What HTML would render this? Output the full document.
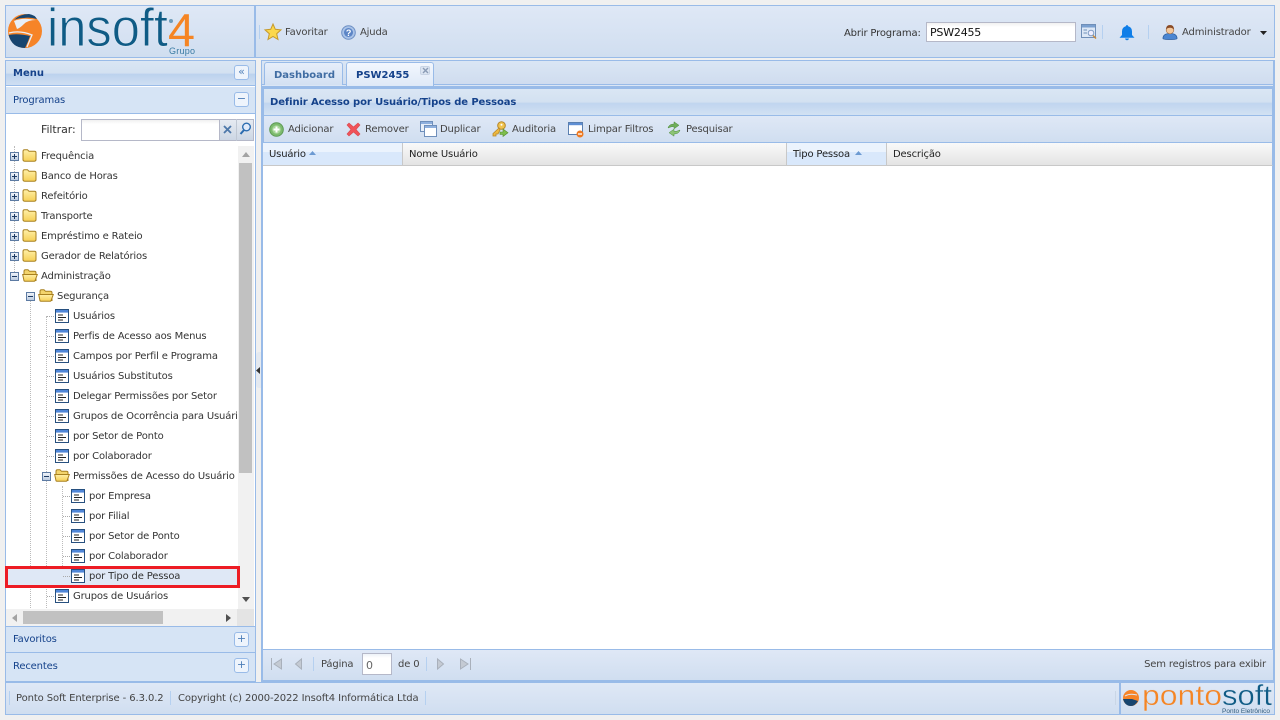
<!DOCTYPE html>
<html lang="pt"><head><meta charset="utf-8"><title>Insoft4</title>
<style>
html,body{margin:0;padding:0;width:1280px;height:720px;overflow:hidden;background:#f0f0f0}
body{position:relative;font-family:"DejaVu Sans","Liberation Sans",sans-serif;font-size:10px;color:#333;letter-spacing:-.16px}
.a{position:absolute;box-sizing:border-box}
.t{position:absolute;white-space:nowrap;line-height:14px;margin-top:1px}
.g1{background:linear-gradient(#dfe8f6,#d0def0)}
.hd{background:linear-gradient(#dae6f4 0,#d3e1f1 50%,#bcd2ee 55%,#cfdff2 100%)}
.row{position:absolute;left:0;height:20px;white-space:nowrap;line-height:22px;color:#333;width:231px;overflow:hidden}
.row span{position:absolute;top:0}
svg{position:absolute;overflow:visible}
.sep{position:absolute;width:1px;background:#b5d0f0}
.btn{position:absolute;width:15px;height:15px;border:1px solid #99bbe8;border-radius:3px;background:#eef4fc;box-sizing:border-box;color:#4f7fb8;text-align:center;line-height:12px;font-size:11px;font-weight:normal;letter-spacing:0}
</style></head><body>
<svg width="0" height="0" style="position:absolute">
<defs>
<linearGradient id="fg" x1="0" y1="0" x2="0" y2="1"><stop offset="0" stop-color="#fff0a8"/><stop offset="1" stop-color="#f6cf55"/></linearGradient>
<linearGradient id="bx" x1="0" y1="0" x2="0" y2="1"><stop offset="0" stop-color="#f2f6fb"/><stop offset="1" stop-color="#b9c9de"/></linearGradient>
<symbol id="fc" viewBox="0 0 15 13"><path d="M1 2.500Q1 .8 2.600 .8H5.500L7 2.300H12.500Q14 2.300 14 3.800V10.500Q14 12.200 12.400 12.200H2.600Q1 12.200 1 10.500Z" fill="url(#fg)" stroke="#a8801f"/></symbol>
<symbol id="fo" viewBox="0 0 16 13"><path d="M2 2.500Q2 .8 3.500 .8H6L7.500 2.300H12.500Q14 2.300 14 3.800V11.500H3Q2 11.500 2 10.500Z" fill="#f3d46c" stroke="#a8801f"/><path d="M.7 5.500H15.300L13 11.800Q12.700 12.200 12 12.200H3Q2.300 12.200 2 11.800Z" fill="url(#fg)" stroke="#a8801f"/></symbol>
<symbol id="pg" viewBox="0 0 14 14"><rect x=".5" y=".5" width="13" height="13" fill="#fff" stroke="#27507f"/><rect x="1" y="1" width="12" height="2.600" fill="#4f86d8"/><path d="M3 6H8M3 8.500H11M3 11H8" stroke="#222" stroke-width="1"/></symbol>
<symbol id="pl" viewBox="0 0 9 9"><rect x=".5" y=".5" width="8" height="8" fill="url(#bx)" stroke="#5d7ba3"/><path d="M2 4.500H7M4.500 2V7" stroke="#1d3a63"/></symbol>
<symbol id="mi" viewBox="0 0 9 9"><rect x=".5" y=".5" width="8" height="8" fill="url(#bx)" stroke="#5d7ba3"/><path d="M2 4.500H7" stroke="#1d3a63"/></symbol>
</defs></svg>

<!-- HEADER -->
<div class="a g1" style="left:5px;top:5px;width:1270px;height:53px;border:1px solid #99bbe8"></div>
<div class="a" style="left:254px;top:6px;width:2px;height:51px;background:#99bbe8"></div>
<svg style="left:0;top:0" width="256" height="58">
 <circle cx="25" cy="31" r="17" fill="#f68428"/>
 <path d="M8.600 35Q17 33 30 36Q28 42 25 48Q12 48 8.600 35Z" fill="#17456f"/>
 <path d="M14 20Q20 14 29 14Q35 15 37 19Q30 17 24 18Q18 18 14 20Z" fill="#17456f"/>
 <path d="M9 33Q20 30 32 35Q29 42 27 47" fill="none" stroke="#e8eef6" stroke-width="1.300"/>
 <path d="M14 21Q23 17 36 20Q28 20 24 24Q20 28 17 29" fill="#e8eef6"/>
 <text x="47" y="46" font-family="Liberation Sans" font-size="54" letter-spacing="0" fill="#0f5b85" stroke="#dae5f3" stroke-width=".9" textLength="121" lengthAdjust="spacingAndGlyphs">insoft</text>
 <text x="168" y="46" font-family="Liberation Sans" font-size="46" letter-spacing="0" fill="#f58524" textLength="27" lengthAdjust="spacingAndGlyphs">4</text>
 <text x="169" y="54" font-family="Liberation Sans" font-size="9" letter-spacing="0" fill="#3a7ba3" textLength="26">Grupo</text>
 <circle cx="171" cy="21" r="2" fill="#6f9dbb"/>
</svg>
<div class="sep" style="left:259px;top:25px;height:14px"></div>
<svg style="left:264px;top:23px" width="18" height="18" viewBox="0 0 18 18"><path d="M9 1L11.300 6.300L17 6.900L12.700 10.700L14 16.500L9 13.500L4 16.500L5.300 10.700L1 6.900L6.700 6.300Z" fill="#fbd84c" stroke="#c69a2c"/></svg>
<div class="t" style="left:285px;top:25px;color:#444">Favoritar</div>
<svg style="left:341px;top:25px" width="15" height="15" viewBox="0 0 15 15"><circle cx="7.500" cy="7.500" r="6.800" fill="#a9c3e8" stroke="#6d8fc4"/><circle cx="7.500" cy="7.500" r="4.500" fill="#5c85c6"/><text x="7.500" y="11" font-size="9" font-weight="bold" fill="#fff" text-anchor="middle" font-family="Liberation Sans">?</text></svg>
<div class="t" style="left:360px;top:25px;color:#444">Ajuda</div>
<div class="t" style="left:844px;top:26px;color:#333">Abrir Programa:</div>
<div class="a" style="left:926px;top:22px;width:150px;height:20px;background:linear-gradient(#f0f0f0,#fff 4px);border:1px solid #b5b8c8"></div>
<div class="t" style="left:930px;top:25px;color:#111;font-size:11px;letter-spacing:-.2px">PSW2455</div>
<svg style="left:1081px;top:24px" width="17" height="16" viewBox="0 0 17 16"><rect x=".5" y=".5" width="14" height="13" fill="#dde8f6" stroke="#6f8fb8"/><rect x="1" y="1" width="13" height="2.500" fill="#7aa0d0"/><path d="M2.500 6H6M2.500 9H6" stroke="#6f8fb8"/><circle cx="10" cy="9" r="2.800" fill="#eef" stroke="#7e9cc4"/><path d="M12 11.500L15 14.500" stroke="#c9893b" stroke-width="1.500"/></svg>
<div class="sep" style="left:1102px;top:25px;height:14px"></div>
<svg style="left:1119px;top:24px" width="16" height="17" viewBox="0 0 16 16"><path d="M8 .5Q9 .5 9.200 1.800Q13 2.800 13 7V10.500L15.500 13.300H.5L3 10.500V7Q3 2.800 6.800 1.800Q7 .5 8 .5ZM6 14H10Q9.500 15.800 8 15.800Q6.500 15.800 6 14Z" fill="#0f7ee8"/></svg>
<div class="sep" style="left:1148px;top:25px;height:14px"></div>
<svg style="left:1162px;top:24px" width="16" height="16" viewBox="0 0 16 16"><path d="M1 14.500Q1 9.500 8 9.500Q15 9.500 15 14.500Q15 15.500 8 15.500Q1 15.500 1 14.500Z" fill="#4b86d2" stroke="#2e5f9f" stroke-width=".8"/><circle cx="8" cy="6" r="3.800" fill="#f3c89c" stroke="#a8734a" stroke-width=".7"/><path d="M4 5.500Q4 1 8 1Q12 1 12 5.500Q9.500 3.500 8 3.800Q5.500 3.800 4 5.500Z" fill="#8a4b26"/></svg>
<div class="t" style="left:1182px;top:25px;color:#444">Administrador</div>
<svg style="left:1260px;top:31px" width="7" height="4"><path d="M0 0H7L3.500 4Z" fill="#222"/></svg>

<!-- LEFT PANEL -->
<div class="a" style="left:5px;top:60px;width:251px;height:622px;border:1px solid #99bbe8;background:#fff"></div>
<div class="a hd" style="left:6px;top:61px;width:249px;height:25px;border-bottom:1px solid #99bbe8"></div>
<div class="t" style="left:13px;top:66px;color:#15428b;font-weight:bold;letter-spacing:0">Menu</div>
<div class="btn" style="left:234px;top:65px">«</div>
<div class="a" style="left:6px;top:87px;width:249px;height:27px;background:#d6e4f5;border-bottom:1px solid #99bbe8"></div>
<div class="t" style="left:13px;top:93px;color:#15428b">Programas</div>
<div class="btn" style="left:234px;top:92px">−</div>
<div class="t" style="left:41px;top:122px;font-size:11px;color:#333;letter-spacing:-.08px">Filtrar:</div>
<div class="a" style="left:81px;top:119px;width:139px;height:22px;background:linear-gradient(#f0f0f0,#fff 4px);border:1px solid #b5b8c8"></div>
<div class="a" style="left:220px;top:119px;width:34px;height:22px;background:linear-gradient(#e6ebf2,#ccd6e4);border:1px solid #b5b8c8;border-left:0"></div>
<div class="a" style="left:236px;top:119px;width:1px;height:22px;background:#c0c8d4"></div>
<svg style="left:223px;top:125px" width="9" height="9"><path d="M1 1L8 8M8 1L1 8" stroke="#4d78aa" stroke-width="1.800"/></svg>
<svg style="left:239px;top:122px" width="13" height="14"><circle cx="7.500" cy="5" r="3.800" fill="#dfeafa" stroke="#2b6cb0" stroke-width="1.400"/><path d="M5 8L1.500 12" stroke="#2b6cb0" stroke-width="2"/></svg>

<!-- TREE -->
<div class="a" style="left:6px;top:146px;width:232px;height:464px;overflow:hidden;background:#fff">
 <div class="a" style="left:8px;top:0;width:0;height:132px;border-left:1px dotted #bbb"></div>
 <div class="a" style="left:24px;top:150px;width:0;height:314px;border-left:1px dotted #bbb"></div>
 <div class="a" style="left:40px;top:170px;width:0;height:294px;border-left:1px dotted #bbb"></div>
 <div class="a" style="left:56px;top:340px;width:0;height:90px;border-left:1px dotted #bbb"></div>
 <div class="a" style="left:0;top:420px;width:232px;height:20px;background:#dfe8f6"></div>

 <div class="row" style="top:0"><svg style="left:4px;top:6px" width="9" height="9"><use href="#pl"/></svg><svg style="left:16px;top:3px" width="15" height="13"><use href="#fc"/></svg><span style="left:35px">Frequência</span></div>
 <div class="row" style="top:20px"><svg style="left:4px;top:6px" width="9" height="9"><use href="#pl"/></svg><svg style="left:16px;top:3px" width="15" height="13"><use href="#fc"/></svg><span style="left:35px">Banco de Horas</span></div>
 <div class="row" style="top:40px"><svg style="left:4px;top:6px" width="9" height="9"><use href="#pl"/></svg><svg style="left:16px;top:3px" width="15" height="13"><use href="#fc"/></svg><span style="left:35px">Refeitório</span></div>
 <div class="row" style="top:60px"><svg style="left:4px;top:6px" width="9" height="9"><use href="#pl"/></svg><svg style="left:16px;top:3px" width="15" height="13"><use href="#fc"/></svg><span style="left:35px">Transporte</span></div>
 <div class="row" style="top:80px"><svg style="left:4px;top:6px" width="9" height="9"><use href="#pl"/></svg><svg style="left:16px;top:3px" width="15" height="13"><use href="#fc"/></svg><span style="left:35px">Empréstimo e Rateio</span></div>
 <div class="row" style="top:100px"><svg style="left:4px;top:6px" width="9" height="9"><use href="#pl"/></svg><svg style="left:16px;top:3px" width="15" height="13"><use href="#fc"/></svg><span style="left:35px">Gerador de Relatórios</span></div>
 <div class="row" style="top:120px"><svg style="left:4px;top:6px" width="9" height="9"><use href="#mi"/></svg><svg style="left:16px;top:3px" width="16" height="13"><use href="#fo"/></svg><span style="left:35px">Administração</span></div>
 <div class="row" style="top:140px"><svg style="left:20px;top:6px" width="9" height="9"><use href="#mi"/></svg><svg style="left:32px;top:3px" width="16" height="13"><use href="#fo"/></svg><span style="left:51px">Segurança</span></div>

 <div class="row" style="top:160px"><svg style="left:41px;top:10px" width="8" height="1"><path d="M0 .5H8" stroke="#aaa" stroke-dasharray="1 1"/></svg><svg style="left:49px;top:3px" width="14" height="14"><use href="#pg"/></svg><span style="left:67px">Usuários</span></div>
 <div class="row" style="top:180px"><svg style="left:41px;top:10px" width="8" height="1"><path d="M0 .5H8" stroke="#aaa" stroke-dasharray="1 1"/></svg><svg style="left:49px;top:3px" width="14" height="14"><use href="#pg"/></svg><span style="left:67px">Perfis de Acesso aos Menus</span></div>
 <div class="row" style="top:200px"><svg style="left:41px;top:10px" width="8" height="1"><path d="M0 .5H8" stroke="#aaa" stroke-dasharray="1 1"/></svg><svg style="left:49px;top:3px" width="14" height="14"><use href="#pg"/></svg><span style="left:67px">Campos por Perfil e Programa</span></div>
 <div class="row" style="top:220px"><svg style="left:41px;top:10px" width="8" height="1"><path d="M0 .5H8" stroke="#aaa" stroke-dasharray="1 1"/></svg><svg style="left:49px;top:3px" width="14" height="14"><use href="#pg"/></svg><span style="left:67px">Usuários Substitutos</span></div>
 <div class="row" style="top:240px"><svg style="left:41px;top:10px" width="8" height="1"><path d="M0 .5H8" stroke="#aaa" stroke-dasharray="1 1"/></svg><svg style="left:49px;top:3px" width="14" height="14"><use href="#pg"/></svg><span style="left:67px">Delegar Permissões por Setor</span></div>
 <div class="row" style="top:260px"><svg style="left:41px;top:10px" width="8" height="1"><path d="M0 .5H8" stroke="#aaa" stroke-dasharray="1 1"/></svg><svg style="left:49px;top:3px" width="14" height="14"><use href="#pg"/></svg><span style="left:67px">Grupos de Ocorrência para Usuários</span></div>
 <div class="row" style="top:280px"><svg style="left:41px;top:10px" width="8" height="1"><path d="M0 .5H8" stroke="#aaa" stroke-dasharray="1 1"/></svg><svg style="left:49px;top:3px" width="14" height="14"><use href="#pg"/></svg><span style="left:67px">por Setor de Ponto</span></div>
 <div class="row" style="top:300px"><svg style="left:41px;top:10px" width="8" height="1"><path d="M0 .5H8" stroke="#aaa" stroke-dasharray="1 1"/></svg><svg style="left:49px;top:3px" width="14" height="14"><use href="#pg"/></svg><span style="left:67px">por Colaborador</span></div>
 <div class="row" style="top:320px"><svg style="left:36px;top:6px" width="9" height="9"><use href="#mi"/></svg><svg style="left:48px;top:3px" width="16" height="13"><use href="#fo"/></svg><span style="left:67px">Permissões de Acesso do Usuário</span></div>

 <div class="row" style="top:340px"><svg style="left:57px;top:10px" width="8" height="1"><path d="M0 .5H8" stroke="#aaa" stroke-dasharray="1 1"/></svg><svg style="left:65px;top:3px" width="14" height="14"><use href="#pg"/></svg><span style="left:83px">por Empresa</span></div>
 <div class="row" style="top:360px"><svg style="left:57px;top:10px" width="8" height="1"><path d="M0 .5H8" stroke="#aaa" stroke-dasharray="1 1"/></svg><svg style="left:65px;top:3px" width="14" height="14"><use href="#pg"/></svg><span style="left:83px">por Filial</span></div>
 <div class="row" style="top:380px"><svg style="left:57px;top:10px" width="8" height="1"><path d="M0 .5H8" stroke="#aaa" stroke-dasharray="1 1"/></svg><svg style="left:65px;top:3px" width="14" height="14"><use href="#pg"/></svg><span style="left:83px">por Setor de Ponto</span></div>
 <div class="row" style="top:400px"><svg style="left:57px;top:10px" width="8" height="1"><path d="M0 .5H8" stroke="#aaa" stroke-dasharray="1 1"/></svg><svg style="left:65px;top:3px" width="14" height="14"><use href="#pg"/></svg><span style="left:83px">por Colaborador</span></div>
 <div class="row" style="top:420px"><svg style="left:57px;top:10px" width="8" height="1"><path d="M0 .5H8" stroke="#aaa" stroke-dasharray="1 1"/></svg><svg style="left:65px;top:3px" width="14" height="14"><use href="#pg"/></svg><span style="left:83px">por Tipo de Pessoa</span></div>
 <div class="row" style="top:440px"><svg style="left:41px;top:10px" width="8" height="1"><path d="M0 .5H8" stroke="#aaa" stroke-dasharray="1 1"/></svg><svg style="left:49px;top:3px" width="14" height="14"><use href="#pg"/></svg><span style="left:67px">Grupos de Usuários</span></div>
</div>

<!-- scrollbars -->
<div class="a" style="left:238px;top:146px;width:16px;height:464px;background:#f1f1f1"></div>
<div class="a" style="left:239px;top:163px;width:13px;height:310px;background:#c1c1c1"></div>
<svg style="left:242px;top:152px" width="8" height="5"><path d="M0 5H8L4 0Z" fill="#a3a3a3"/></svg>
<svg style="left:242px;top:597px" width="8" height="5"><path d="M0 0H8L4 5Z" fill="#505050"/></svg>
<div class="a" style="left:6px;top:609px;width:248px;height:17px;background:#f1f1f1"></div>
<div class="a" style="left:237px;top:609px;width:17px;height:17px;background:#e4e4e4"></div>
<div class="a" style="left:23px;top:611px;width:140px;height:13px;background:#c1c1c1"></div>
<svg style="left:12px;top:614px" width="5" height="8"><path d="M5 0V8L0 4Z" fill="#a3a3a3"/></svg>
<svg style="left:226px;top:614px" width="5" height="8"><path d="M0 0V8L5 4Z" fill="#505050"/></svg>
<div class="a" style="left:5px;top:566px;width:235px;height:22px;border:3px solid #ed1c24"></div>

<div class="a" style="left:6px;top:626px;width:249px;height:27px;background:#d6e4f5;border-top:1px solid #99bbe8;border-bottom:1px solid #99bbe8"></div>
<div class="t" style="left:13px;top:632px;color:#15428b">Favoritos</div>
<div class="btn" style="left:234px;top:632px">+</div>
<div class="a" style="left:6px;top:653px;width:249px;height:28px;background:#d6e4f5"></div>
<div class="t" style="left:13px;top:659px;color:#15428b">Recentes</div>
<div class="btn" style="left:234px;top:658px">+</div>

<!-- collapse handle -->
<div class="a" style="left:256px;top:352px;width:5px;height:36px;background:#e4e9f0;border-radius:3px 0 0 3px"></div>
<svg style="left:256px;top:367px" width="4" height="7"><path d="M4 0V7L0 3.500Z" fill="#333"/></svg>

<!-- RIGHT PANEL -->
<div class="a" style="left:261px;top:60px;width:1014px;height:622px;border:1px solid #99bbe8;border-width:1px 2px 2px 1px;background:#99bbe8"></div>
<div class="a" style="left:262px;top:61px;width:1011px;height:24px;background:linear-gradient(#dae6f4,#cfdcef)"></div>
<div class="a" style="left:262px;top:84px;width:1011px;height:3px;background:#dbe6f5;border-top:1px solid #99bbe8;border-bottom:1px solid #99bbe8"></div>
<div class="a" style="left:264px;top:62px;width:79px;height:23px;background:linear-gradient(#e6eefa,#d3e0f2);border:1px solid #99bbe8;border-bottom:0;border-radius:3px 3px 0 0"></div>
<div class="t" style="left:274px;top:68px;font-weight:bold;color:#416da3;letter-spacing:0">Dashboard</div>
<div class="a" style="left:346px;top:62px;width:88px;height:24px;background:linear-gradient(#f2f7fe,#dfe9f7);border:1px solid #99bbe8;border-bottom:0;border-radius:3px 3px 0 0"></div>
<div class="t" style="left:356px;top:68px;font-weight:bold;color:#15428b;letter-spacing:0">PSW2455</div>
<div class="a" style="left:420px;top:66px;width:10px;height:9px;background:#dce5f2;border:1px solid #c7d3e4;border-radius:2px"></div>
<svg style="left:423px;top:68px" width="5" height="5"><path d="M0 0L5 5M5 0L0 5" stroke="#8a9bb5" stroke-width="1.400"/></svg>

<div class="a" style="left:263px;top:88px;width:1010px;height:28px;border:1px solid #99bbe8;background:linear-gradient(#dae6f4 0,#d3e1f1 50%,#c0d5ef 55%,#d2e1f3 100%)"></div>
<div class="t" style="left:270px;top:95px;font-weight:bold;color:#15428b;letter-spacing:-.1px">Definir Acesso por Usuário/Tipos de Pessoas</div>
<div class="a" style="left:263px;top:116px;width:1010px;height:27px;background:linear-gradient(#dfe8f6,#d0def0);border:1px solid #99bbe8;border-top:0"></div>

<svg style="left:269px;top:122px" width="15" height="15" viewBox="0 0 15 15"><circle cx="7.500" cy="7.500" r="6.800" fill="#7dbb6e" stroke="#5d9a55"/><circle cx="7.500" cy="7.500" r="4.300" fill="#a7d69a"/><path d="M7.500 4.500V10.500M4.500 7.500H10.500" stroke="#fff" stroke-width="2"/></svg>
<div class="t" style="left:288px;top:122px;color:#444">Adicionar</div>
<svg style="left:346px;top:122px" width="15" height="15" viewBox="0 0 15 15"><path d="M1 3L3 1L7.500 5L12 1L14 3L10 7.500L14 12L12 14L7.500 10L3 14L1 12L5 7.500Z" fill="#f0535a" stroke="#d94a4e" stroke-width=".6"/></svg>
<div class="t" style="left:365px;top:122px;color:#444">Remover</div>
<svg style="left:420px;top:121px" width="17" height="16" viewBox="0 0 17 16"><rect x=".5" y=".5" width="12" height="10" fill="#e8eff9" stroke="#6f8fbb"/><rect x="1" y="1" width="11" height="2" fill="#8fb0de"/><rect x="4.500" y="4.500" width="12" height="11" fill="#fff" stroke="#6f8fbb"/><rect x="5" y="5" width="11" height="2" fill="#8fb0de"/></svg>
<div class="t" style="left:440px;top:122px;color:#444">Duplicar</div>
<svg style="left:492px;top:121px" width="16" height="16" viewBox="0 0 16 16"><circle cx="9.500" cy="4.500" r="3.800" fill="#f0c34e" stroke="#b5862a"/><circle cx="9.500" cy="3.800" r="1" fill="#fff"/><path d="M7 7L1 12.500V15H4V13H6L8 9Z" fill="#eeb93f" stroke="#b5862a" stroke-width=".8"/><path d="M8 11H11V8L16 11.700L11 15.500V13.500H8Z" fill="#7fbf4d" stroke="#568e2e" stroke-width=".6"/></svg>
<div class="t" style="left:512px;top:122px;color:#444">Auditoria</div>
<svg style="left:568px;top:122px" width="16" height="16" viewBox="0 0 16 16"><rect x=".5" y=".5" width="14" height="12" fill="#fff" stroke="#5a7fb0"/><rect x="1" y="1" width="13" height="2.200" fill="#5f8fd4"/><circle cx="12" cy="12" r="3.500" fill="#ee7a22"/><path d="M10 12H14" stroke="#fff" stroke-width="1.300"/></svg>
<div class="t" style="left:588px;top:122px;color:#444">Limpar Filtros</div>
<svg style="left:666px;top:121px" width="16" height="16" viewBox="0 0 16 16"><path d="M2 7Q3 3 8 3V.8L13 4.300L8 7.800V5.500Q5 5.500 2 7Z" fill="#6fae5a" stroke="#4f8c3f" stroke-width=".5"/><path d="M14 9Q13 13 8 13V15.200L3 11.700L8 8.200V10.500Q11 10.500 14 9Z" fill="#8cc474" stroke="#4f8c3f" stroke-width=".5"/></svg>
<div class="t" style="left:686px;top:122px;color:#444">Pesquisar</div>

<!-- grid header -->
<div class="a" style="left:263px;top:143px;width:1010px;height:23px;background:linear-gradient(#f9f9f9,#e4e4e4);border-bottom:1px solid #c8c8c8;border-right:1px solid #99bbe8"></div>
<div class="a" style="left:263px;top:143px;width:140px;height:22px;background:linear-gradient(#ebf3fd 0,#ebf3fd 42%,#d9e8fb 42%,#d9e8fb 100%);border-right:1px solid #c8c8c8"></div>
<div class="a" style="left:786px;top:143px;width:101px;height:22px;background:linear-gradient(#ebf3fd 0,#ebf3fd 42%,#d9e8fb 42%,#d9e8fb 100%);border-left:1px solid #c8c8c8;border-right:1px solid #c8c8c8"></div>
<div class="t" style="left:269px;top:147px;color:#222">Usuário</div>
<svg style="left:309px;top:151px" width="7" height="4"><path d="M0 4H7L3.500 0Z" fill="#6c9ad2"/></svg>
<div class="t" style="left:409px;top:147px;color:#222">Nome Usuário</div>
<div class="t" style="left:793px;top:147px;color:#222">Tipo Pessoa</div>
<svg style="left:855px;top:151px" width="7" height="4"><path d="M0 4H7L3.500 0Z" fill="#6c9ad2"/></svg>
<div class="t" style="left:893px;top:147px;color:#222">Descrição</div>
<div class="a" style="left:263px;top:166px;width:1009px;height:483px;background:#fff"></div>

<!-- pager -->
<div class="a" style="left:263px;top:649px;width:1010px;height:31px;background:linear-gradient(#dfe8f6,#d0def0);border-top:1px solid #99bbe8"></div>
<svg style="left:271px;top:658px" width="11" height="12"><path d="M.5 0V12M10.500 1V11L3 6Z" fill="#c4cad3" stroke="#a9b0bb"/></svg>
<svg style="left:295px;top:658px" width="7" height="12"><path d="M6.500 1V11L.5 6Z" fill="#c4cad3" stroke="#a9b0bb"/></svg>
<div class="sep" style="left:313px;top:657px;height:14px"></div>
<div class="t" style="left:321px;top:657px;color:#444">Página</div>
<div class="a" style="left:362px;top:653px;width:30px;height:22px;background:linear-gradient(#eef2f8,#fff 4px);border:1px solid #b5b8c8"></div>
<div class="t" style="left:366px;top:658px;color:#666;font-size:11px">0</div>
<div class="t" style="left:398px;top:657px;color:#444">de 0</div>
<div class="sep" style="left:426px;top:657px;height:14px"></div>
<svg style="left:437px;top:658px" width="7" height="12"><path d="M.5 1V11L6.500 6Z" fill="#c4cad3" stroke="#a9b0bb"/></svg>
<svg style="left:460px;top:658px" width="11" height="12"><path d="M10.500 0V12M.5 1V11L8 6Z" fill="#c4cad3" stroke="#a9b0bb"/></svg>
<div class="t" style="right:14px;top:657px;color:#444">Sem registros para exibir</div>

<!-- FOOTER -->
<div class="a g1" style="left:5px;top:682px;width:1270px;height:33px;border:1px solid #99bbe8"></div>
<div class="sep" style="left:9px;top:691px;height:14px"></div>
<div class="t" style="left:16px;top:691px;color:#444;letter-spacing:-.1px">Ponto Soft Enterprise - 6.3.0.2</div>
<div class="sep" style="left:170px;top:691px;height:14px"></div>
<div class="t" style="left:178px;top:691px;color:#444;letter-spacing:-.11px">Copyright (c) 2000-2022 Insoft4 Informática Ltda</div>
<div class="sep" style="left:425px;top:691px;height:14px"></div>
<div class="sep" style="left:1115px;top:691px;height:14px;background:#c9d6e6"></div>
<div class="a" style="left:1119px;top:682px;width:2px;height:33px;background:#99bbe8"></div>
<svg style="left:1120px;top:682px" width="155" height="33">
 <circle cx="11" cy="16" r="8" fill="#f68428"/>
 <path d="M3 17H12L18 19Q15 24 11 24Q5 24 3 17Z" fill="#17456f"/>
 <path d="M5 14Q10 11 17 13" stroke="#dfe8f6" fill="none"/>
 <text x="22" y="23" font-family="Liberation Sans" font-size="29" letter-spacing="0" fill="#f58524" stroke="#d6e2f1" stroke-width=".4" textLength="80" lengthAdjust="spacingAndGlyphs">ponto</text>
 <text x="102" y="23" font-family="Liberation Sans" font-size="29" letter-spacing="0" fill="#0f5b85" stroke="#d6e2f1" stroke-width=".4" textLength="50" lengthAdjust="spacingAndGlyphs">soft</text>
 <text x="102" y="31" font-family="Liberation Sans" font-size="6.500" letter-spacing="0" fill="#2f5a7c" textLength="48">Ponto Eletrônico</text>
</svg>
</body></html>
